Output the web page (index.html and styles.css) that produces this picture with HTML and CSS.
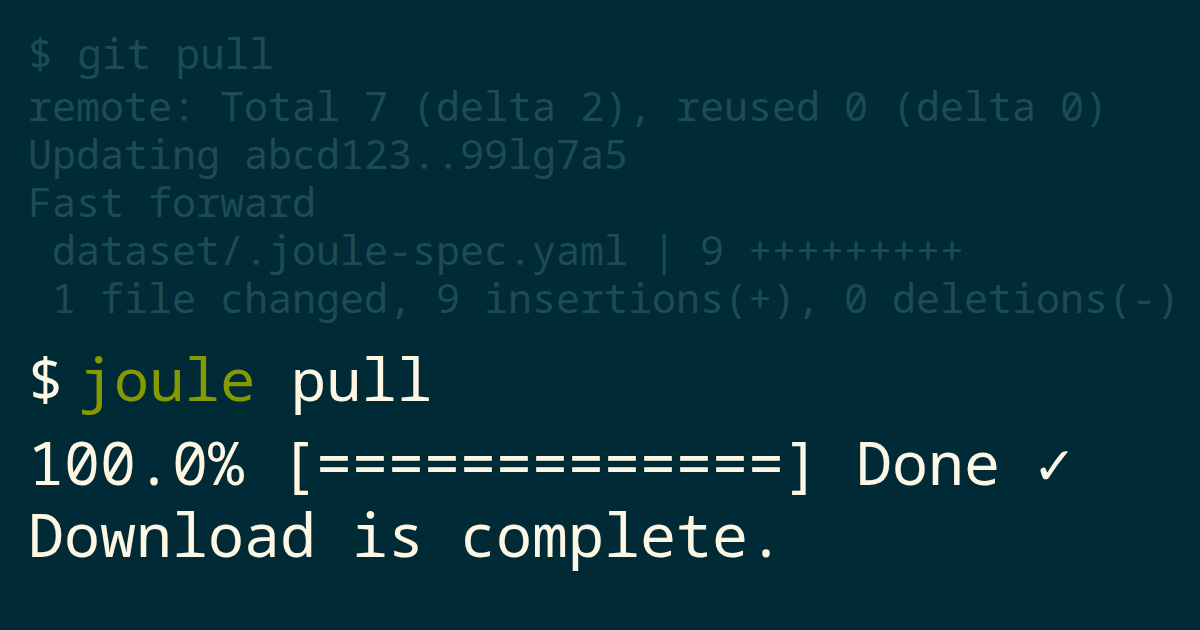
FILE: index.html
```html
<!DOCTYPE html>
<html lang="en">
<head>
<meta charset="utf-8">
<title>joule pull</title>
<link rel="stylesheet" href="styles.css">
</head>
<body>
<main class="term">
  <section class="history">
    <div class="line prompt-line">$ git pull</div>
    <div class="output">
      <div class="line">remote: Total 7 (delta 2), reused 0 (delta 0)</div>
      <div class="line">Updating abcd123..99lg7a5</div>
      <div class="line">Fast forward</div>
      <div class="line"> dataset/.joule-spec.yaml | 9 +++++++++</div>
      <div class="line"> 1 file changed, 9 insertions(+), 0 deletions(-)</div>
    </div>
  </section>
  <section class="current">
    <div class="cmd"><span class="dollar">$</span><span class="prog">joule</span> pull</div>
    <div class="result">
      <div class="big">100.0% [=============] Done ✓</div>
      <div class="big">Download is complete.</div>
    </div>
  </section>
</main>
</body>
</html>
```
FILE: styles.css
```css
html, body {
  margin: 0;
  padding: 0;
  background: #002b36;
}
.term {
  width: 1200px;
  height: 630px;
  box-sizing: border-box;
  padding: 29px 0 0 28px;
  font-family: "Noto Sans Mono", "Droid Sans Mono", "DejaVu Sans Mono", monospace;
  overflow: hidden;
}
.line {
  white-space: pre;
}
.history {
  color: #1e4a54;
  font-size: 40px;
  line-height: 48px;
}
.prompt-line {
  font-size: 41px;
  margin-bottom: 5px;
}
.current {
  color: #fdf6e3;
  margin-top: 22px;
}
.cmd {
  white-space: pre;
  font-size: 59px;
  line-height: 68px;
}
.dollar {
  margin-right: 15px;
}
.prog {
  color: #859900;
}
.result {
  margin-top: 14px;
}
.big {
  white-space: pre;
  font-size: 60px;
  line-height: 72px;
}
```
